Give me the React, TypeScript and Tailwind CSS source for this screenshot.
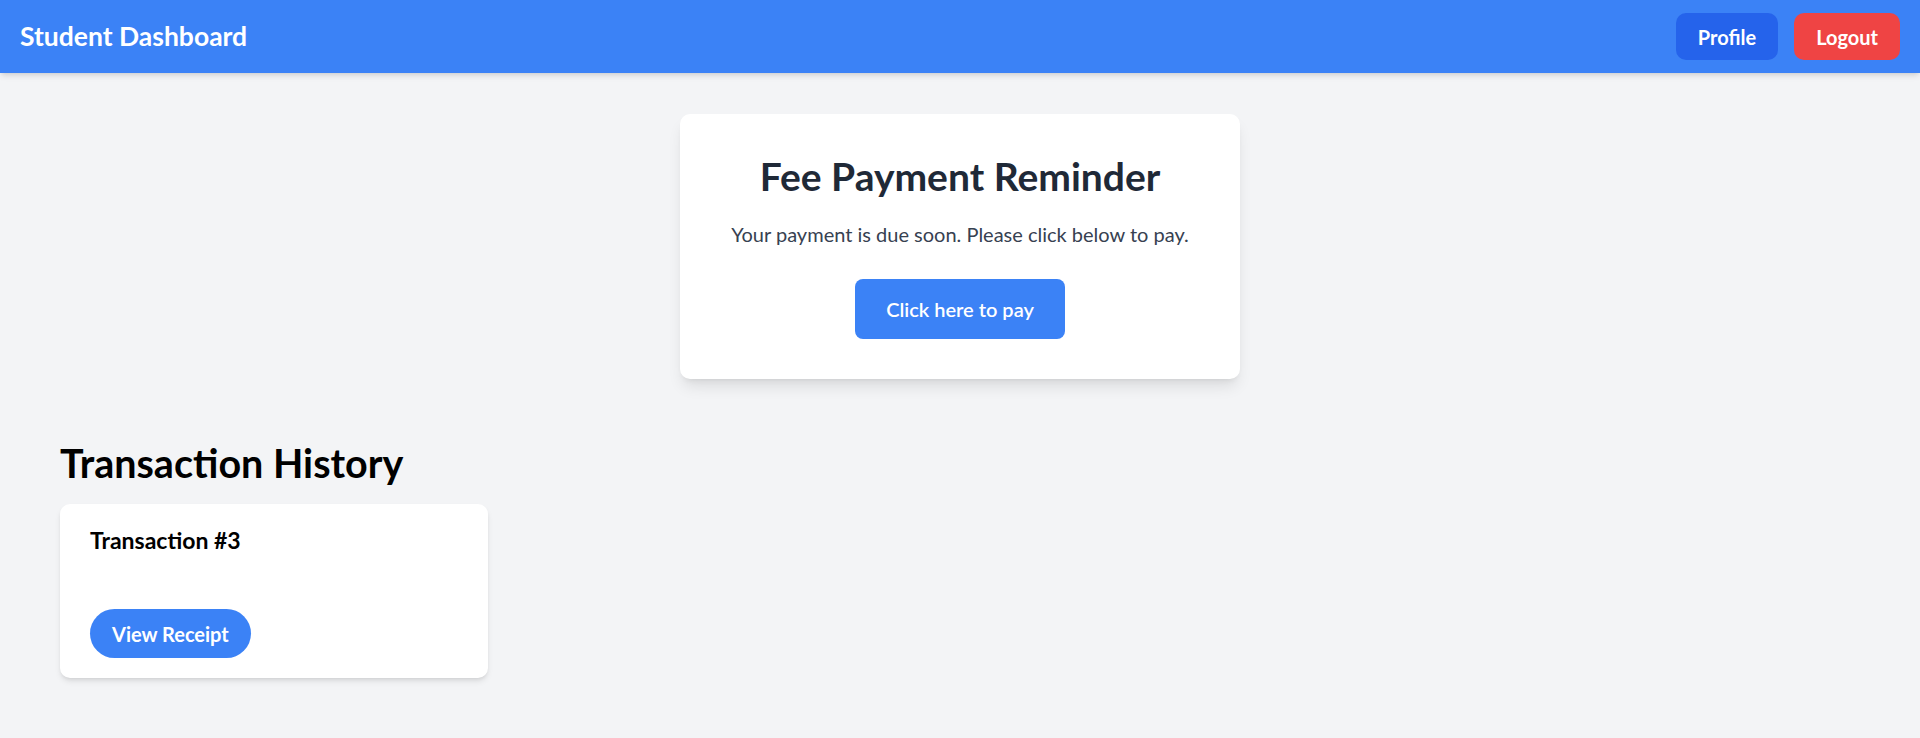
export default function App() {
  return (
    <div className="min-h-screen bg-[#f3f4f6] font-['Lato',sans-serif]">
      {/* Barra superior */}
      <header className="flex h-[73px] items-center justify-between bg-[#3b82f6] px-5 shadow-md">
        <h1 className="text-[26.5px] font-bold text-white">Student Dashboard</h1>
        <div className="flex gap-4">
          <button className="h-[47px] rounded-[10px] bg-[#2563eb] px-[22px] text-[20px] font-bold text-white">
            Profile
          </button>
          <button className="h-[47px] rounded-[10px] bg-[#ef4444] px-[22px] text-[20px] font-bold text-white">
            Logout
          </button>
        </div>
      </header>

      <main className="px-[60px] pb-10">
        {/* Recordatorio de pago */}
        <div className="mt-[41px] flex justify-center">
          <div className="w-[560px] rounded-[10px] bg-white px-10 pt-[41px] pb-10 text-center shadow-lg">
            <h2 className="text-[39px] leading-[42px] font-bold text-[#1f2937]">Fee Payment Reminder</h2>
            <p className="mt-[23px] text-[20px] leading-[28px] text-[#374151]">
              Your payment is due soon. Please click below to pay.
            </p>
            <button className="mt-[31px] h-[60px] rounded-lg bg-[#3b82f6] px-[31px] text-[20px] font-semibold text-white">
              Click here to pay
            </button>
          </div>
        </div>

        {/* Historial */}
        <h2 className="mt-[60px] text-[39.5px] leading-[47px] font-bold text-black">Transaction History</h2>
        <div className="mt-[18px] flex w-[428px] flex-col items-start rounded-[10px] bg-white px-[30px] pt-6 pb-5 shadow-md">
          <h3 className="text-[23px] leading-[25px] font-bold text-black">Transaction #3</h3>
          <button className="mt-[56px] h-[49px] rounded-full bg-[#3b82f6] px-[22px] text-[20px] font-bold text-white">
            View Receipt
          </button>
        </div>
      </main>
    </div>
  );
}
